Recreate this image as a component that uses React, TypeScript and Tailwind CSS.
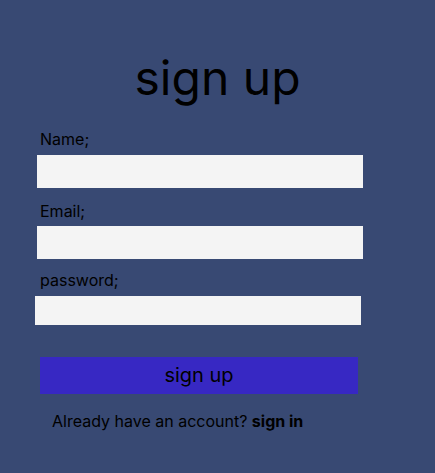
export default function App() {
  return (
    <div
      className="min-h-[473px] w-full bg-[#384973] text-black"
      style={{ fontFamily: "Inter, 'Noto Sans', sans-serif" }}
    >
      <div className="flex flex-col pt-[49px]">
        <h1 className="text-center text-[48px] leading-[58px] font-normal">sign up</h1>

        <form className="flex flex-col mt-[20px]">
          <label className="ml-[40px] text-base leading-6">Name;</label>
          <input className="ml-[37px] mt-[4px] w-[326px] h-[33px] bg-[#f4f4f4] outline-none" />

          <label className="ml-[40px] mt-[11px] text-base leading-6">Email;</label>
          <input className="ml-[37px] mt-[3px] w-[326px] h-[33px] bg-[#f4f4f4] outline-none" />

          <label className="ml-[40px] mt-[9px] text-base leading-6">password;</label>
          <input
            type="password"
            className="ml-[35px] mt-[4px] w-[326px] h-[29px] bg-[#f4f4f4] outline-none"
          />

          <button
            type="button"
            className="ml-[40px] mt-[32px] w-[318px] h-[37px] bg-[#3728c3] text-[20px] leading-[37px]"
          >
            sign up
          </button>

          <p className="ml-[52px] mt-[15px] text-base leading-6">
            Already have an account? <span className="font-bold">sign in</span>
          </p>
        </form>
      </div>
    </div>
  );
}
